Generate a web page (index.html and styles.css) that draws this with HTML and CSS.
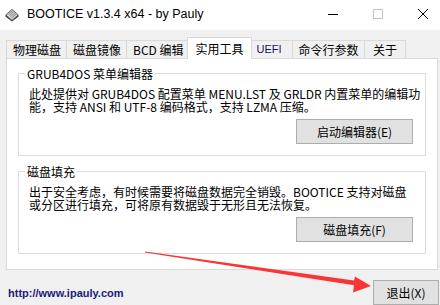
FILE: index.html
```html
<!DOCTYPE html>
<html lang="zh-CN">
<head>
<meta charset="utf-8">
<title>BOOTICE</title>
<link rel="stylesheet" href="styles.css">
</head>
<body>
<div class="window">
  <div class="titlebar">
    <svg class="app-icon" width="14" height="14" viewBox="0 0 14 14">
      <polygon points="0.5,7 7,1 13.5,7 13.5,8.5 7,13.5 0.5,8.5" fill="#2b2b2b"/>
      <polygon points="1.2,7 7,1.8 12.8,7 7,12.2" fill="#d4d4d4"/>
      <path d="M3.5,6.2 L7.5,2.8 M4.5,7.4 L9,3.6 M5.6,8.6 L10.2,4.8 M6.8,9.8 L11.2,6" stroke="#7a7a7a" stroke-width="0.8"/>
      <polygon points="1.2,7 7,12.2 12.8,7 12.8,8.2 7,12.9 1.2,8.2" fill="#5a5a5a"/>
    </svg>
    <span class="title">BOOTICE v1.3.4 x64 - by Pauly</span>
    <div class="controls">
      <span class="ctl"><svg width="10" height="10" viewBox="0 0 10 10"><path d="M0,5.5 H10" stroke="#000" stroke-width="1"/></svg></span>
      <span class="ctl"><svg width="10" height="10" viewBox="0 0 10 10"><rect x="0.5" y="0.5" width="9" height="9" fill="none" stroke="#c4c4c4" stroke-width="1"/></svg></span>
      <span class="ctl"><svg width="10" height="10" viewBox="0 0 10 10"><path d="M0,0 L10,10 M10,0 L0,10" stroke="#000" stroke-width="1"/></svg></span>
    </div>
  </div>

  <div class="main">
    <div class="tabs">
      <div class="tab">物理磁盘</div>
      <div class="tab">磁盘镜像</div>
      <div class="tab">BCD 编辑</div>
      <div class="tab tab-active">实用工具</div>
      <div class="tab tab-latin">UEFI</div>
      <div class="tab">命令行参数</div>
      <div class="tab tab-last">关于</div>
    </div>

    <div class="panel">
      <div class="group">
        <div class="group-title">GRUB4DOS 菜单编辑器</div>
        <p class="desc">此处提供对 GRUB4DOS 配置菜单 MENU.LST 及 GRLDR 内置菜单的编辑功<br>能，支持 ANSI 和 UTF-8 编码格式，支持 LZMA 压缩。</p>
        <div class="actions"><button class="btn btn-wide">启动编辑器(E)</button></div>
      </div>
      <div class="group group-second">
        <div class="group-title">磁盘填充</div>
        <p class="desc">出于安全考虑，有时候需要将磁盘数据完全销毁。BOOTICE 支持对磁盘<br>或分区进行填充，可将原有数据毁于无形且无法恢复。</p>
        <div class="actions"><button class="btn btn-wide">磁盘填充(F)</button></div>
      </div>
    </div>

    <div class="footer">
      <a class="link" href="#">http://www.ipauly.com</a>
      <button class="btn btn-exit">退出(X)</button>
    </div>
  </div>

  <svg class="annotation" width="440" height="305" viewBox="0 0 440 305">
    <polygon points="145,251.4 354,280.6 355,276.5 371,286 353,292.5 354,285.2 145,252.6" fill="#fa3535"/>
  </svg>
</div>
</body>
</html>
```

FILE: styles.css
```css
* {
  box-sizing: border-box;
}

html, body {
  margin: 0;
  padding: 0;
}

body {
  width: 440px;
  height: 305px;
  overflow: hidden;
  background: #f0f0f0;
  font-family: "Noto Sans CJK SC", sans-serif;
  font-size: 12px;
  color: #000;
}

.window {
  position: relative;
  width: 440px;
  height: 305px;
  overflow: hidden;
}

/* Title bar */
.titlebar {
  height: 30px;
  background: #fff;
  display: flex;
  align-items: center;
}

.app-icon {
  margin-left: 5px;
  flex: none;
}

.title {
  margin-left: 8px;
  font-family: "Liberation Sans", Arial, sans-serif;
  font-size: 12.5px;
  line-height: 16px;
  margin-top: -2px;
}

.controls {
  margin-left: auto;
  margin-right: -5px;
  display: flex;
  align-self: flex-start;
}

.ctl {
  width: 45px;
  height: 28px;
  display: flex;
  align-items: center;
  justify-content: center;
}

/* Main area */
.main {
  padding: 0 2px 0 6px;
}

.tabs {
  margin-top: 7px;
  display: flex;
  align-items: flex-end;
}

.tab {
  height: 18px;
  padding: 0 5px 0 6px;
  border-top: 1px solid #d9d9d9;
  border-left: 1px solid #d9d9d9;
  background: #f0f0f0;
  line-height: 17px;
  white-space: nowrap;
  text-align: center;
}

.tab-latin {
  min-width: 42px;
  font-family: "Liberation Sans", Arial, sans-serif;
  font-size: 11px;
  color: #14145a;
  text-align: left;
}

.tab-last {
  min-width: 42px;
  border-right: 1px solid #d9d9d9;
}

.tab-active {
  position: relative;
  z-index: 1;
  height: 22px;
  margin: 0 -2px -1px -2px;
  padding: 2px 7px 0 8px;
  background: #fff;
  border-right: 1px solid #d9d9d9;
}

.panel {
  background: #fff;
  border: 1px solid #d9d9d9;
  padding: 14px 11px 15px 11px;
}

.group {
  border: 1px solid #dcdcdc;
  padding: 0 12px 11px 10px;
}

.group-second {
  margin-top: 15px;
}

.group-title {
  width: fit-content;
  margin: -7px 0 0 -4px;
  padding: 0 2px;
  background: #fff;
  line-height: 14px;
  white-space: nowrap;
}

.desc {
  margin: 6px 0 0 0;
  line-height: 13px;
  white-space: nowrap;
}

.actions {
  margin-top: 6px;
  display: flex;
  justify-content: flex-end;
}

.btn {
  height: 25px;
  border: 1px solid #adadad;
  background: #e1e1e1;
  font-family: "Noto Sans CJK SC", sans-serif;
  font-size: 12px;
  color: #000;
  padding: 0;
  line-height: 23px;
}

.btn-wide {
  width: 117px;
}

/* Footer */
.footer {
  display: flex;
  align-items: center;
  justify-content: space-between;
  padding: 10px 0 0 2px;
}

.link {
  font-family: "Liberation Sans", Arial, sans-serif;
  font-weight: bold;
  font-size: 11px;
  color: #1b1b7a;
  text-decoration: none;
}

.btn-exit {
  width: 66px;
  margin-right: -1px;
}

.annotation {
  position: absolute;
  top: 0;
  left: 0;
  pointer-events: none;
}
```
